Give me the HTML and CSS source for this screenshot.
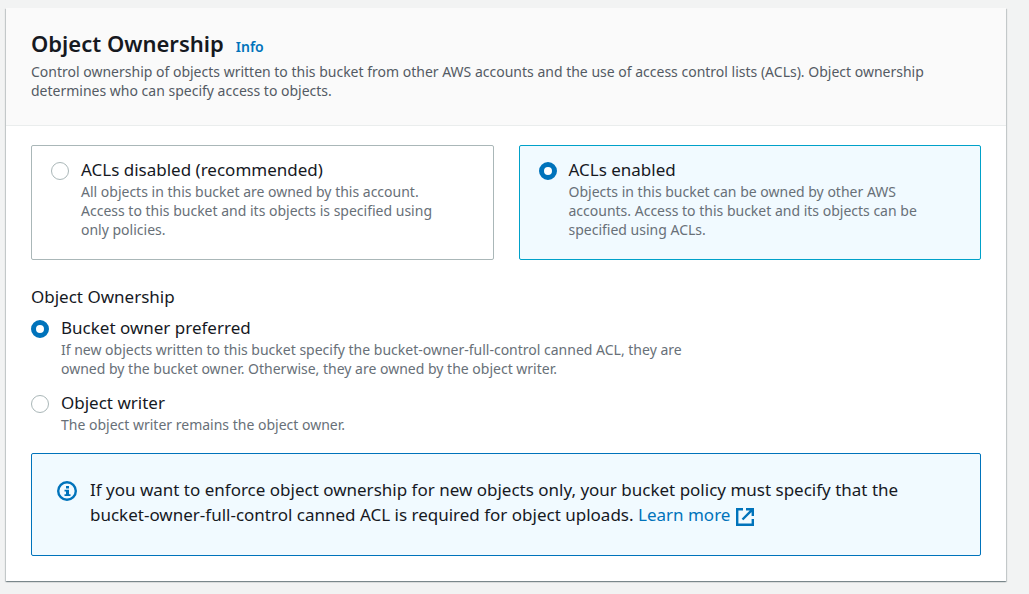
FILE: index.html
```html
<!DOCTYPE html>
<html lang="en">
<head>
<meta charset="utf-8">
<meta name="viewport" content="width=device-width, initial-scale=1">
<title>Object Ownership</title>
<link rel="stylesheet" href="styles.css">
</head>
<body>
<main class="panel">
  <header class="panel-header">
    <div class="heading">
      <h1 class="title">Object Ownership</h1>
      <a class="info-link" href="#info">Info</a>
    </div>
    <p class="summary">Control ownership of objects written to this bucket from other AWS accounts and the use of access control lists (ACLs). Object ownership determines who can specify access to objects.</p>
  </header>
  <form class="panel-body">
    <div class="tiles">
      <label class="tile">
        <input class="radio" type="radio" name="acl">
        <span class="option-text">
          <span class="option-name">ACLs disabled (recommended)</span>
          <span class="option-note">All objects in this bucket are owned by this account. Access to this bucket and its objects is specified using only policies.</span>
        </span>
      </label>
      <label class="tile tile-selected">
        <input class="radio" type="radio" name="acl" checked>
        <span class="option-text">
          <span class="option-name">ACLs enabled</span>
          <span class="option-note">Objects in this bucket can be owned by other AWS accounts. Access to this bucket and its objects can be specified using ACLs.</span>
        </span>
      </label>
    </div>
    <fieldset class="ownership">
      <legend class="legend">Object Ownership</legend>
      <div class="options">
        <label class="option">
          <input class="radio" type="radio" name="owner" checked>
          <span class="option-text">
            <span class="option-name">Bucket owner preferred</span>
            <span class="option-note">If new objects written to this bucket specify the bucket-owner-full-control canned ACL, they are owned by the bucket owner. Otherwise, they are owned by the object writer.</span>
          </span>
        </label>
        <label class="option">
          <input class="radio" type="radio" name="owner">
          <span class="option-text">
            <span class="option-name">Object writer</span>
            <span class="option-note">The object writer remains the object owner.</span>
          </span>
        </label>
      </div>
    </fieldset>
    <div class="alert">
      <svg class="alert-icon" viewBox="0 0 20 20" aria-hidden="true">
        <circle cx="10" cy="10" r="8.8" fill="none" stroke="#0073bb" stroke-width="2.4"/>
        <path d="M9 5h3v2.5H9zM7.5 8.7H12v4.6h1.5V15h-6v-1.7H9v-2.9H7.5z" fill="#0073bb"/>
      </svg>
      <p class="alert-text">If you want to enforce object ownership for new objects only, your bucket policy must specify that the bucket-owner-full-control canned ACL is required for object uploads. <a class="learn-link" href="#learn">Learn more <svg class="external-icon" viewBox="0 0 18 18" aria-hidden="true"><path d="M7 1.2H1.2v15.6h15.6V11M10 1.2h6.8V8M16.3 1.7L6.5 11.5" fill="none" stroke="currentColor" stroke-width="2.4"/></svg></a></p>
    </div>
  </form>
</main>
</body>
</html>
```
FILE: styles.css
```css
* {
  box-sizing: border-box;
}

body {
  margin: 0;
  padding: 8px 23px 12px 6px;
  background: #f2f3f3;
  color: #16191f;
  font-family: "Noto Sans", "Open Sans", sans-serif;
  font-size: 17px;
  line-height: 25px;
}

a {
  color: #0073bb;
  text-decoration: none;
}

.panel {
  background: #fff;
  box-shadow: 0 1px 1px 0 rgba(0, 28, 36, 0.3), 1px 1px 1px 0 rgba(0, 28, 36, 0.15), -1px 1px 1px 0 rgba(0, 28, 36, 0.15);
}

.panel-header {
  padding: 21px 25px 25px;
  background: #fafafa;
  border-bottom: 1px solid #eaeded;
}

.heading {
  display: flex;
  align-items: baseline;
  gap: 12px;
}

.title {
  margin: 0;
  font-size: 22px;
  line-height: 28px;
  font-weight: 600;
}

.info-link {
  font-size: 14px;
  line-height: 20px;
  font-weight: 600;
}

.summary {
  margin: 5px 0 0;
  color: #545b64;
  font-size: 14px;
  line-height: 19px;
}

.panel-body {
  padding: 19px 25px 25px;
}

.tiles {
  display: grid;
  grid-template-columns: 1fr 1fr;
  gap: 25px;
}

.tile {
  display: flex;
  gap: 12px;
  padding: 11px 40px 20px 19px;
  border: 1px solid #aab7b8;
  border-radius: 2px;
}

.tile-selected {
  border-color: #00a1c9;
  background: #f1faff;
}

.radio {
  appearance: none;
  flex: none;
  width: 18px;
  height: 18px;
  margin: 5px 0 0;
  border: 1px solid #aab7b8;
  border-radius: 50%;
  background: #fff;
}

.radio:checked {
  border: 5px solid #0073bb;
}

.option-name,
.option-note {
  display: block;
}

.option-note {
  color: #687078;
  font-size: 14px;
  line-height: 19px;
}

.ownership {
  margin: 24px 0 0;
  padding: 0;
  border: 0;
}

.legend {
  padding: 0;
}

.options {
  display: grid;
  gap: 12px;
  padding-top: 6px;
}

.option {
  display: flex;
  gap: 12px;
  max-width: 680px;
}

.alert {
  display: flex;
  gap: 13px;
  margin-top: 19px;
  padding: 23px 25px 28px;
  border: 1px solid #0073bb;
  border-radius: 2px;
  background: #f1faff;
}

.alert-icon {
  flex: none;
  width: 20px;
  height: 20px;
  margin-top: 4px;
}

.alert-text {
  margin: 0;
}

.learn-link {
  white-space: nowrap;
}

.external-icon {
  width: 18px;
  height: 18px;
  margin-left: 1px;
  vertical-align: -5px;
}
```
